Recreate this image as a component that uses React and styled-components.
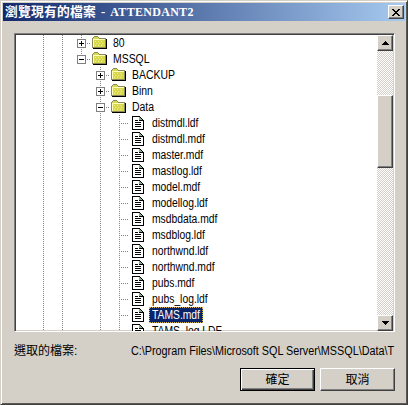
import React from "react";
import styled, { createGlobalStyle, css } from "styled-components";

const GlobalStyle = createGlobalStyle`
  * { box-sizing: border-box; }
  html, body { margin: 0; overflow: hidden; background: #d4d0c8; }
`;

const raised = css`
  border: 1px solid;
  border-color: #fff #404040 #404040 #fff;
  box-shadow: inset -1px -1px 0 #808080;
`;

const Dialog = styled.div`
  display: flex;
  flex-direction: column;
  width: 408px;
  height: 405px;
  padding: 1px 2px 1px 1px;
  background: #d4d0c8;
  border: 1px solid;
  border-color: #d4d0c8 #404040 #404040 #d4d0c8;
  box-shadow: inset 1px 1px 0 #fff, inset -1px -1px 0 #5c5854;
  font: 12px/16px "Liberation Sans", "Noto Sans CJK TC", sans-serif;
  color: #000;
  cursor: default;
  user-select: none;
`;

const TitleBar = styled.div`
  display: flex;
  align-items: center;
  flex: none;
  height: 18px;
  margin: 1px 0 0 1px;
  padding: 0 1px 0 2px;
  background: linear-gradient(90deg, #12296c, #a6caf0);
`;

const Title = styled.h1`
  flex: 1;
  display: flex;
  align-items: center;
  gap: 5px;
  margin: 0;
  color: #fff;
  font: bold 12.8px/18px "Liberation Serif", "Noto Sans CJK TC", serif;
  white-space: nowrap;
`;

const TitleText = styled.span`
  font-size: ${(p) => p.$size || "12.8px"};
  letter-spacing: ${(p) => p.$spacing || "0"};
`;

const CloseButton = styled.button`
  ${raised}
  display: grid;
  place-items: center;
  width: 16px;
  height: 14px;
  padding: 0;
  background: #d4d0c8;
`;

const TreeFrame = styled.div`
  display: flex;
  flex: none;
  width: 381px;
  height: 299px;
  margin: 12px 0 0 12px;
  background: #fff;
  border: 1px solid;
  border-color: #808080 #fff #fff #808080;
  box-shadow: inset 1px 1px 0 #404040, inset -1px -1px 0 #d4d0c8;
  padding: 1px;
`;

const Tree = styled.div`
  flex: 1;
  height: 296px;
  overflow: hidden;
  padding-left: 18px;
`;

const Row = styled.div`
  display: flex;
  height: 16px;
  white-space: nowrap;
`;

const dotsV = "repeating-linear-gradient(180deg, #848484 0 1px, transparent 1px 2px)";
const dotsH = "repeating-linear-gradient(90deg, #848484 0 1px, transparent 1px 2px)";

const Guide = styled.span`
  display: grid;
  place-items: center;
  flex: none;
  width: 19px;
  height: 16px;
  background-repeat: no-repeat;
  background-image: ${(p) => (p.$line ? dotsV : "none")}, ${(p) => (p.$branch ? dotsH : "none")};
  background-position: 9px 0, 9px 8px;
  background-size: 1px ${(p) => (p.$line === "half" ? "8px" : "16px")}, 11px 1px;
`;

const Label = styled.span`
  height: 16px;
  margin-left: 4px;
  padding: 0 1px 0 ${(p) => (p.$file ? "3px" : "2px")};
  line-height: 16px;
  ${(p) =>
    p.$selected &&
    css`
      width: 54px;
      background: #0a246a;
      color: #fff;
      outline: 1px dotted #d8b84c;
      outline-offset: -1px;
    `}
`;

const Condensed = styled.span`
  display: inline-block;
  transform: scaleX(${(p) => p.$ratio || 0.87});
  transform-origin: 0 50%;
`;

const Glyph = styled.svg`
  display: block;
  flex: none;
`;

const ScrollBar = styled.div`
  display: flex;
  flex-direction: column;
  width: 16px;
  height: 296px;
  background: repeating-conic-gradient(#d4d0c8 0 25%, #fff 0 50%) 0 0 / 2px 2px;
`;

const ArrowButton = styled.button`
  ${raised}
  display: grid;
  place-items: center;
  flex: none;
  width: 16px;
  height: 16px;
  padding: 0;
  background: #d4d0c8;
`;

const Thumb = styled.div`
  ${raised}
  height: 73px;
  margin: 44px 0 auto;
  background: #d4d0c8;
`;

const PathRow = styled.div`
  display: flex;
  margin: 11px 0 0 12px;
  height: 16px;
  white-space: nowrap;
`;

const PathCaption = styled.span`
  width: 117px;
  flex: none;
`;

const Actions = styled.div`
  display: flex;
  justify-content: flex-end;
  gap: 5px;
  margin: 9px 10px 0 0;
`;

const ActionButton = styled.button`
  ${raised}
  height: 23px;
  width: 75px;
  padding: 0 0 1px;
  background: #d4d0c8;
  color: #000;
  font: 12px/20px "Noto Sans CJK TC", sans-serif;
  ${(p) =>
    p.$primary &&
    css`
      border-color: #000;
      box-shadow: inset 1px 1px 0 #fff, inset -1px -1px 0 #404040, inset -2px -2px 0 #808080;
    `}
`;

const Expander = ({ open }) => (
  <Glyph width="9" height="9" shapeRendering="crispEdges">
    <path d="M.5 .5h8v8h-8z" fill="#fff" stroke="#808080" />
    <path d={open ? "M2 4h5v1H2z" : "M2 4h5v1H2zM4 2h1v5H4z"} fill="#000" />
  </Glyph>
);

const Folder = () => (
  <Glyph width="16" height="16" shapeRendering="crispEdges">
    <path d="M2 13h13V4h1v10H2z" fill="#000" />
    <path d="M1 3h1V2h1V1h4v1h1v1h7v10H1z" fill="#8a8a60" />
    <path d="M2 3h1V2h4v1h1v1h6v8H2z" fill="#d8d84c" />
    <path d="M2 4h12v1H3v7H2z" fill="#ffffb8" />
    <path d="M4 6h1v1H4zM7 6h1v1H7zM10 6h1v1h-1zM5 8h1v1H5zM8 8h1v1H8zM11 8h1v1h-1zM4 10h1v1H4zM7 10h1v1H7zM10 10h1v1h-1z" fill="#f1ed92" />
  </Glyph>
);

const FileIcon = () => (
  <Glyph width="16" height="16" shapeRendering="crispEdges">
    <path d="M3 1h8v1h1v1h1v1h1v1h1v10H3z" fill="#000" />
    <path d="M4 2h6v4h4v8H4z" fill="#fff" />
    <path d="M10 2h1v1h1v1h1v1h-3z" fill="#79b58b" />
    <path d="M6 5h3v1H6zM6 7h6v1H6zM6 9h6v1H6zM6 11h6v1H6z" fill="#000" />
  </Glyph>
);

const Arrow = ({ down }) => (
  <Glyph width="7" height="4" shapeRendering="crispEdges">
    <path d={down ? "M0 0h7v1H6v1H5v1H4v1H3V3H2V2H1V1H0z" : "M3 0h1v1h1v1h1v1h1v1H0V3h1V2h1V1h1z"} />
  </Glyph>
);

const folders = [
  { name: "80", level: 0, open: false },
  { name: "MSSQL", level: 0, open: true, last: true },
  { name: "BACKUP", level: 1, open: false },
  { name: "Binn", level: 1, open: false },
  { name: "Data", level: 1, open: true },
];

const files = [
  "distmdl.ldf", "distmdl.mdf", "master.mdf", "mastlog.ldf", "model.mdf",
  "modellog.ldf", "msdbdata.mdf", "msdblog.ldf", "northwnd.ldf",
  "northwnd.mdf", "pubs.mdf", "pubs_log.ldf", "TAMS.mdf", "TAMS_log.LDF",
];

export default function App() {
  return (
    <>
      <GlobalStyle />
      <Dialog>
        <TitleBar>
          <Title>
            <TitleText $spacing="0.2px">瀏覽現有的檔案</TitleText>
            <TitleText>-</TitleText>
            <TitleText $size="12px" $spacing="0.3px">ATTENDANT2</TitleText>
          </Title>
          <CloseButton aria-label="關閉">
            <Glyph width="8" height="7" shapeRendering="crispEdges">
              <path d="M0 0h2v1h1v1h2V1h1V0h2v1H7v1H6v1H5v1h1v1h1v1h1v1H6V6H5V5H3v1H2v1H0V6h1V5h1V4h1V3H2V2H1V1H0z" />
            </Glyph>
          </CloseButton>
        </TitleBar>
        <TreeFrame>
          <Tree>
            {folders.map((f) => (
              <Row key={f.name}>
                <Guide $line="full" />
                <Guide $line="full" />
                {f.level === 1 && <Guide />}
                <Guide $line={f.last ? "half" : "full"} $branch>
                  <Expander open={f.open} />
                </Guide>
                <Folder />
                <Label>
                  <Condensed>{f.name}</Condensed>
                </Label>
              </Row>
            ))}
            {files.map((name) => (
              <Row key={name}>
                <Guide $line="full" />
                <Guide $line="full" />
                <Guide />
                <Guide $line="full" />
                <Guide $line="full" $branch />
                <FileIcon />
                <Label $file $selected={name === "TAMS.mdf"}>
                  <Condensed $ratio={0.86}>{name}</Condensed>
                </Label>
              </Row>
            ))}
          </Tree>
          <ScrollBar>
            <ArrowButton aria-label="上"><Arrow /></ArrowButton>
            <Thumb />
            <ArrowButton aria-label="下"><Arrow down /></ArrowButton>
          </ScrollBar>
        </TreeFrame>
        <PathRow>
          <PathCaption>選取的檔案:</PathCaption>
          <Condensed $ratio={0.9}>C:\Program Files\Microsoft SQL Server\MSSQL\Data\T</Condensed>
        </PathRow>
        <Actions>
          <ActionButton $primary>確定</ActionButton>
          <ActionButton>取消</ActionButton>
        </Actions>
      </Dialog>
    </>
  );
}
